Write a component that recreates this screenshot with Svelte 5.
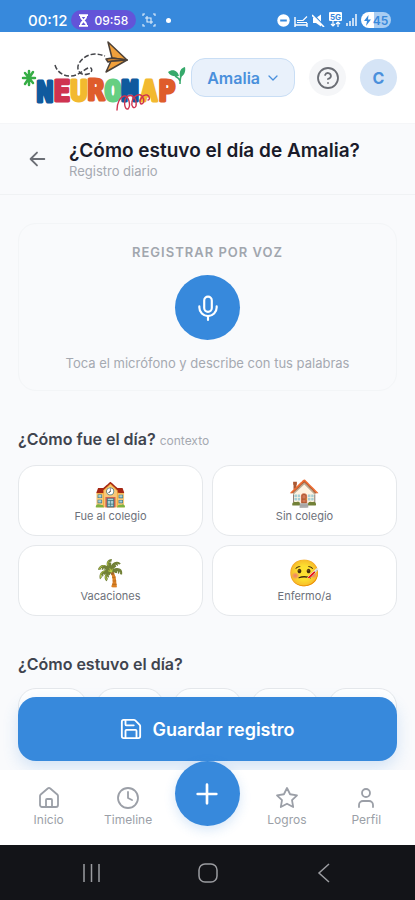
<script>
    let nino = "Amalia";
    let contexto = "";

    const letras = [
        { l: "N", x: 25, y: 62, color: "#0f5a9e" },
        { l: "E", x: 42, y: 61, color: "#cf3350" },
        { l: "U", x: 59, y: 61, color: "#f2b92f" },
        { l: "R", x: 76, y: 60, color: "#df5c2b" },
        { l: "O", x: 93, y: 61, color: "#66cf82" },
        { l: "M", x: 110, y: 61, color: "#0f5a9e" },
        { l: "A", x: 129, y: 61, color: "#f2b92f" },
        { l: "P", x: 147, y: 61, color: "#df5c2b" },
    ];

    const contextos = [
        { id: "colegio", emoji: "🏫", texto: "Fue al colegio" },
        { id: "casa", emoji: "🏠", texto: "Sin colegio" },
        { id: "vacaciones", emoji: "🌴", texto: "Vacaciones" },
        { id: "enfermo", emoji: "🤒", texto: "Enfermo/a" },
    ];

    const estados = [1, 2, 3, 4, 5];

    function elegirContexto(id) {
        contexto = contexto === id ? "" : id;
    }
</script>

<div class="app">
    <div class="status">
        <span class="hora">00:12</span>
        <span class="timer">
            <svg width="9" height="13" viewBox="0 0 10 14" fill="#fff"><path d="M0 0h10v2H9c0 2.500-1.500 3.800-2.800 5C7.500 8.200 9 9.500 9 12h1v2H0v-2h1c0-2.500 1.500-3.800 2.800-5C2.500 5.800 1 4.500 1 2H0z" /><path d="M3 3h4L5 5.500zM2.500 12L5 9l2.500 3z" fill="#6354d8" /></svg>
            09:58
        </span>
        <svg class="captura" width="14" height="14" viewBox="0 0 14 14" fill="none" stroke="#e4f0fc" stroke-width="1.100"><path d="M1 3V1h2M11 1h2v2M13 11v2h-2M3 13H1v-2M5 3v6h6M3 5h6v6" /></svg>
        <i class="punto"></i>
        <div class="iconos">
            <svg width="13" height="13" viewBox="0 0 13 13"><circle cx="6.500" cy="6.500" r="6.200" fill="#fff" /><path d="M3.200 6.500h6.600" stroke="#3789dc" stroke-width="2" /></svg>
            <svg width="14" height="13" viewBox="0 0 14 13" fill="none" stroke="#fff" stroke-width="1.400"><path d="M1 3v10M13 9v4M1 11h12" /><path d="M3 8.500h10M3 6.500h6l4-4" stroke-width="1.200" /></svg>
            <svg width="13" height="13" viewBox="0 0 13 13"><path d="M1 4h3l5-3.500v12L4 9H1z" fill="#fff" /><path d="M1 0l12 13" stroke="#3789dc" stroke-width="1.500" /><path d="M0 1l12 12" stroke="#fff" stroke-width="1.600" /></svg>
            <svg width="13" height="16" viewBox="0 0 13 16"><rect width="13" height="9" rx="1" fill="#fff" /><text x="6.500" y="7.500" text-anchor="middle" font-size="8" font-weight="700" fill="#3789dc">5G</text><path d="M4 9v5M2 12l2 2 2-2M9 15v-5M7 12l2-2 2 2" fill="none" stroke="#fff" stroke-width="1.200" /></svg>
            <svg width="11" height="12" viewBox="0 0 11 12" stroke="#fff" stroke-width="1.400"><path d="M1 9v3M4 7v5M7 4v8" /><path d="M10 0v12" /></svg>
            <span class="bateria">
                <svg width="7" height="11" viewBox="0 0 7 11"><path d="M4.500 0L0 6h3L2 11l5-6.500H4z" fill="#3789dc" /></svg>
                45
            </span>
        </div>
    </div>

    <header>
        <a class="logo" href="#inicio" aria-label="Neuromap">
            <svg width="168" height="76" viewBox="0 0 168 76">
                <g stroke="#36ad45" stroke-width="2.500" stroke-linecap="round">
                    <path d="M9 31v14M3 38h12M5 33l8 10M13 32L5 44" />
                </g>
                {#each letras as { l, x, y, color }}
                    <text class="letra" {x} {y} fill={color} stroke={color} text-anchor="middle">{l}</text>
                {/each}
                <path d="M35 25c2 7 8 11 15 11 8 0 12-5 18-8 5-2 5 5 0 6-6 2-11-2-10-8 2-7 10-12 17-12 4 0 7 1 10 2" fill="none" stroke="#45464b" stroke-width="1.500" stroke-dasharray="5 2" />
                <g stroke="#4b4038" stroke-width="1.500" stroke-linejoin="round" fill="#f0a03c">
                    <path d="M88 2l19 18-15-2z" />
                    <path d="M107 20L86 32l5-11z" />
                    <path d="M107 20l-15-2-6 1 2 3 4-1z" fill="#c98132" />
                </g>
                <path d="M97 70c0-7 3-13 7-14 5-1 7 10 4 13-4 1-5-10 0-13 5-2 9 3 8 10-2 4-5 0-4-4 1-6 7-9 10-6 3 4 2 8-1 8-3-3 2-10 6-9 3 1 3 5 1 5" fill="none" stroke="#cf3350" stroke-width="1.400" stroke-linecap="round" />
                <path d="M160 44c0-5 0-7 2-10M160 41c-1-3-3-4-5-5" fill="none" stroke="#36a96b" stroke-width="1.500" />
                <path d="M148 32c5-4 10-1 11 4-5 1-9 0-11-4zM160 37c-1-6 1-9 5-10 1 5-1 9-5 10z" fill="#36a96b" />
            </svg>
        </a>
        <button class="selector">
            {nino}
            <svg width="12" height="12" viewBox="0 0 12 12" fill="none" stroke="currentColor" stroke-width="1.300" stroke-linecap="round" stroke-linejoin="round"><path d="M2 4l4 4 4-4" /></svg>
        </button>
        <button class="circulo ayuda" aria-label="Ayuda">
            <svg width="24" height="24" viewBox="0 0 24 24" fill="none" stroke="currentColor" stroke-width="1.800" stroke-linecap="round" stroke-linejoin="round"><circle cx="12" cy="12" r="10" /><path d="M9.090 9a3 3 0 0 1 5.830 1c0 2-3 3-3 3M12 17h.010" /></svg>
        </button>
        <button class="circulo avatar">C</button>
    </header>

    <div class="titulo">
        <button class="volver" aria-label="Volver">
            <svg width="22" height="22" viewBox="0 0 24 24" fill="none" stroke="currentColor" stroke-width="2" stroke-linecap="round" stroke-linejoin="round"><path d="M12 19l-7-7 7-7M20 12H5" /></svg>
        </button>
        <div>
            <h1>¿Cómo estuvo el día de {nino}?</h1>
            <p>Registro diario</p>
        </div>
    </div>

    <div class="cuerpo">
        <main>
            <section class="voz">
                <h2>REGISTRAR POR VOZ</h2>
                <button class="micro" aria-label="Grabar">
                    <svg width="26" height="26" viewBox="0 0 24 24" fill="none" stroke="currentColor" stroke-width="2" stroke-linecap="round" stroke-linejoin="round"><rect x="8.500" y="1.500" width="7" height="14" rx="3.500" /><path d="M20 10.500v1a8 8 0 0 1-16 0v-1M12 19.500V23" /></svg>
                </button>
                <p>Toca el micrófono y describe con tus palabras</p>
            </section>

            <section class="grupo">
                <h3>¿Cómo fue el día? <small>contexto</small></h3>
                <div class="opciones">
                    {#each contextos as c}
                        <button class="opcion" class:activa={contexto === c.id} on:click={() => elegirContexto(c.id)}>
                            <span class="emoji">{c.emoji}</span>
                            {c.texto}
                        </button>
                    {/each}
                </div>
            </section>

            <section class="grupo">
                <h3>¿Cómo estuvo el día?</h3>
                <div class="estados">
                    {#each estados as e}
                        <button class="estado" aria-label={"Nivel " + e}></button>
                    {/each}
                </div>
            </section>
        </main>

        <button class="guardar">
            <svg width="22" height="22" viewBox="0 0 24 24" fill="none" stroke="currentColor" stroke-width="2" stroke-linecap="round" stroke-linejoin="round"><path d="M15.200 2a2 2 0 0 1 1.400.6l4.800 4.800a2 2 0 0 1 .6 1.400V20a2 2 0 0 1-2 2H4a2 2 0 0 1-2-2V4a2 2 0 0 1 2-2z" /><path d="M18 22v-8a1 1 0 0 0-1-1H7a1 1 0 0 0-1 1v8M6 2v5a1 1 0 0 0 1 1h8" /></svg>
            Guardar registro
        </button>
    </div>

    <nav class="menu">
        <a href="#inicio">
            <svg width="24" height="24" viewBox="0 0 24 24"><path d="M15 21v-7a1 1 0 0 0-1-1h-4a1 1 0 0 0-1 1v7" /><path d="M3 10a2 2 0 0 1 .709-1.528l7-6a2 2 0 0 1 2.582 0l7 6A2 2 0 0 1 21 10v9a2 2 0 0 1-2 2H5a2 2 0 0 1-2-2z" /></svg>
            Inicio
        </a>
        <a href="#timeline">
            <svg width="24" height="24" viewBox="0 0 24 24"><circle cx="12" cy="12" r="10" /><path d="M12 6v6l4 2" /></svg>
            Timeline
        </a>
        <button class="nuevo" aria-label="Nuevo registro">
            <svg width="32" height="32" viewBox="0 0 24 24"><path d="M5 12h14M12 5v14" /></svg>
        </button>
        <a href="#logros">
            <svg width="24" height="24" viewBox="0 0 24 24"><path d="M12 2l3.090 6.260L22 9.270l-5 4.870 1.180 6.880L12 17.770l-6.180 3.250L7 14.140 2 9.270l6.910-1.010z" /></svg>
            Logros
        </a>
        <a href="#perfil">
            <svg width="24" height="24" viewBox="0 0 24 24"><path d="M19 21v-2a4 4 0 0 0-4-4H9a4 4 0 0 0-4 4v2" /><circle cx="12" cy="7" r="4" /></svg>
            Perfil
        </a>
    </nav>

    <div class="sistema">
        <button aria-label="Recientes"><svg width="20" height="20" viewBox="0 0 20 20"><path d="M3 1v18M10.500 1v18M18 1v18" /></svg></button>
        <button aria-label="Pantalla de inicio"><svg width="20" height="20" viewBox="0 0 20 20"><rect x="1" y="1" width="18" height="18" rx="6" /></svg></button>
        <button aria-label="Atrás"><svg width="20" height="20" viewBox="0 0 20 20"><path d="M15 1L5 10l10 9" /></svg></button>
    </div>
</div>

<style>
    :global(body) {
        margin: 0;
        background: #f9fafc;
    }
    * {
        box-sizing: border-box;
    }
    .app {
        display: flex;
        flex-direction: column;
        height: 100vh;
        font-family: Inter, "Liberation Sans", sans-serif;
        color: #1a1b2a;
    }
    button {
        font-family: inherit;
        border: none;
        padding: 0;
        cursor: pointer;
    }
    svg {
        display: block;
        flex: none;
    }
    h1, h2, h3, p {
        margin: 0;
    }

    .status {
        display: flex;
        align-items: center;
        flex: none;
        height: 32px;
        padding: 8px 24px 0 28px;
        background: #3789dc;
        color: #fff;
    }
    .hora {
        font-size: 15px;
        font-weight: 500;
    }
    .timer {
        display: flex;
        align-items: center;
        gap: 6px;
        height: 20px;
        margin-left: 4px;
        padding: 0 8px;
        border-radius: 10px;
        background: #6354d8;
        font-size: 12px;
        font-weight: 500;
    }
    .captura {
        margin-left: 6px;
    }
    .punto {
        width: 5px;
        height: 5px;
        margin-left: 10px;
        border-radius: 50%;
        background: #fff;
    }
    .iconos {
        display: flex;
        align-items: center;
        gap: 4px;
        margin-left: auto;
    }
    .bateria {
        display: flex;
        align-items: center;
        justify-content: center;
        gap: 2px;
        width: 30px;
        height: 16px;
        border-radius: 8px;
        background: linear-gradient(90deg, #fff 45%, #a9cdf2 45%);
        color: #3789dc;
        font-size: 12px;
        font-weight: 600;
    }

    header {
        display: flex;
        align-items: center;
        flex: none;
        height: 91px;
        padding: 0 18px 0 20px;
        background: #fff;
    }
    .logo {
        margin-right: auto;
    }
    .letra {
        font-family: "DejaVu Sans Mono", monospace;
        font-size: 28px;
        font-weight: 700;
        stroke-width: 3px;
        stroke-linejoin: round;
    }
    .selector {
        display: flex;
        align-items: center;
        justify-content: center;
        gap: 7px;
        height: 39px;
        padding: 0 15px;
        border: 1px solid #c9def5;
        border-radius: 14px;
        background: #e9f1fb;
        color: #4a90dc;
        font-size: 16px;
        font-weight: 600;
    }
    .circulo {
        display: flex;
        align-items: center;
        justify-content: center;
        width: 37px;
        height: 37px;
        margin-left: 14px;
        border-radius: 50%;
    }
    .ayuda {
        background: #f5f6f8;
        color: #6b6e75;
    }
    .avatar {
        background: #d5e4f6;
        color: #4a90dc;
        font-size: 16px;
        font-weight: 700;
    }

    .titulo {
        display: flex;
        align-items: center;
        flex: none;
        gap: 14px;
        height: 72px;
        padding: 0 18px;
        border-top: 1px solid #f5f6f8;
        border-bottom: 1px solid #f0f2f4;
    }
    .volver {
        display: flex;
        align-items: center;
        justify-content: center;
        width: 37px;
        height: 37px;
        background: none;
        color: #6b6e75;
    }
    h1 {
        font-size: 19px;
        line-height: 23px;
        font-weight: 600;
    }
    .titulo p {
        font-size: 13px;
        line-height: 18px;
        color: #a5a9b1;
    }

    .cuerpo {
        position: relative;
        flex: 1;
        min-height: 0;
    }
    main {
        height: 100%;
        padding: 28px 18px 0;
        overflow: hidden;
    }
    .voz {
        display: flex;
        flex-direction: column;
        align-items: center;
        padding: 18px;
        border: 1px solid #f3f5f7;
        border-radius: 18px;
    }
    .voz h2 {
        font-size: 13px;
        line-height: 20px;
        font-weight: 600;
        letter-spacing: 1px;
        color: #a1a6ae;
    }
    .micro {
        display: flex;
        align-items: center;
        justify-content: center;
        width: 65px;
        height: 65px;
        margin: 13px 0 14px;
        border-radius: 50%;
        background: #3789dc;
        color: #fff;
    }
    .voz p {
        font-size: 13px;
        line-height: 18px;
        color: #a5a9b1;
    }
    .grupo {
        margin-top: 36px;
    }
    h3 {
        margin-bottom: 12px;
        font-size: 16px;
        line-height: 24px;
        font-weight: 600;
        color: #40444f;
    }
    small {
        font-size: 12px;
        font-weight: 400;
        color: #a5a9b1;
    }
    .opciones {
        display: grid;
        grid-template-columns: 1fr 1fr;
        gap: 9px;
    }
    .opcion {
        display: flex;
        flex-direction: column;
        align-items: center;
        justify-content: center;
        height: 71px;
        border: 1px solid #e5e8eb;
        border-radius: 18px;
        background: #fff;
        color: #6d717a;
        font-size: 11px;
        line-height: 16px;
    }
    .opcion.activa {
        border-color: #3789dc;
    }
    .emoji {
        font-family: "Noto Color Emoji", sans-serif;
        font-size: 26px;
        line-height: 30px;
    }
    .estados {
        display: grid;
        grid-template-columns: repeat(5, 1fr);
        gap: 9px;
    }
    .estado {
        height: 70px;
        border: 1px solid #e5e8eb;
        border-radius: 18px;
        background: #fff;
    }
    .guardar {
        position: absolute;
        right: 18px;
        bottom: 9px;
        left: 18px;
        display: flex;
        align-items: center;
        justify-content: center;
        gap: 10px;
        height: 64px;
        border-radius: 18px;
        background: #3789dc;
        box-shadow: 0 6px 16px rgba(55, 137, 220, 0.2);
        color: #fff;
        font-size: 18px;
        font-weight: 600;
    }

    .menu {
        position: relative;
        display: grid;
        grid-template-columns: repeat(5, 1fr);
        flex: none;
        height: 75px;
        padding: 0 9px;
        background: #fff;
    }
    .menu a {
        display: flex;
        flex-direction: column;
        align-items: center;
        justify-content: center;
        gap: 2px;
        padding-bottom: 2px;
        color: #9b9fa7;
        font-size: 12px;
        line-height: 16px;
        text-decoration: none;
    }
    .menu svg {
        fill: none;
        stroke: currentColor;
        stroke-width: 2;
        stroke-linecap: round;
        stroke-linejoin: round;
    }
    .menu a svg {
        stroke-width: 1.8;
    }
    .nuevo {
        display: flex;
        align-items: center;
        justify-content: center;
        justify-self: center;
        width: 65px;
        height: 65px;
        margin-top: -9px;
        border-radius: 50%;
        background: #3789dc;
        box-shadow: 0 4px 12px rgba(55, 137, 220, 0.2);
        color: #fff;
    }

    .sistema {
        display: flex;
        align-items: center;
        justify-content: space-between;
        flex: none;
        height: 55px;
        padding: 0 81px;
        background: #131418;
    }
    .sistema button {
        background: none;
    }
    .sistema svg {
        fill: none;
        stroke: #9b9ca0;
        stroke-width: 1.5;
    }
</style>
